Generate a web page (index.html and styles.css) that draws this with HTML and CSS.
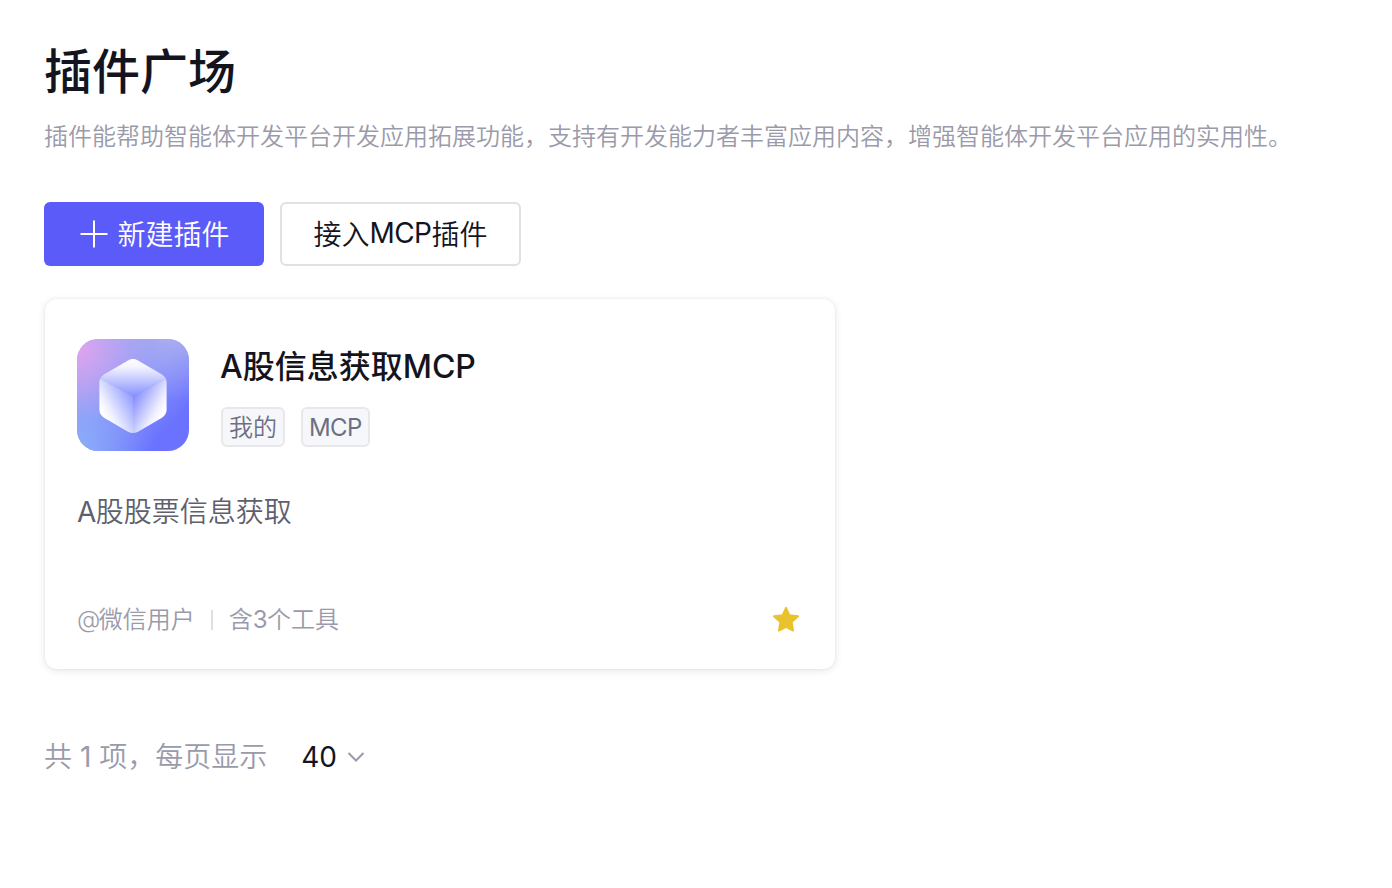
FILE: index.html
```
<!DOCTYPE html>
<html lang="zh-CN">
  <head>
    <meta charset="UTF-8" />
    <meta name="viewport" content="width=device-width, initial-scale=1.0" />
    <title>插件广场</title>
    <link rel="stylesheet" href="styles.css">
  </head>
  <body>
    <header class="page-header">
      <h1 class="page-title">插件广场</h1>
      <p class="page-desc">插件能帮助智能体开发平台开发应用拓展功能，支持有开发能力者丰富应用内容，增强智能体开发平台应用的实用性。</p>
    </header>

    <div class="actions">
      <button class="btn btn-primary">
        <svg class="plus-icon" viewBox="0 0 28 28">
          <path d="M14 .5v27M.5 14h27" />
        </svg>
        <span>新建插件</span>
      </button>
      <button class="btn btn-default">接入<span class="latin">MCP</span>插件</button>
    </div>

    <div class="card">
      <div class="card-head">
        <svg class="card-logo" viewBox="0 0 112 112">
          <defs>
            <linearGradient id="bg" x1="0.1" y1="0" x2="0.9" y2="0.8">
              <stop offset="0" stop-color="#a9aaf3" />
              <stop offset="0.5" stop-color="#8e98f9" />
              <stop offset="0.95" stop-color="#6a72ff" />
            </linearGradient>
            <radialGradient id="pink" cx="0" cy="0.1" r="0.65">
              <stop offset="0" stop-color="#e0a2ef" />
              <stop offset="1" stop-color="#c6a5f0" stop-opacity="0" />
            </radialGradient>
            <radialGradient id="blue" cx="0" cy="1" r="0.7">
              <stop offset="0" stop-color="#8cb0fa" />
              <stop offset="1" stop-color="#80a0fa" stop-opacity="0" />
            </radialGradient>
            <radialGradient id="pale" cx="0.85" cy="-0.1" r="0.65">
              <stop offset="0" stop-color="#b0b2ee" />
              <stop offset="1" stop-color="#a0a4f3" stop-opacity="0" />
            </radialGradient>
            <linearGradient id="top" x1="0" y1="0" x2="0" y2="1">
              <stop offset="0" stop-color="#fff" />
              <stop offset="0.25" stop-color="#f4f4ff" />
              <stop offset="1" stop-color="#8790ff" />
            </linearGradient>
            <linearGradient id="left" gradientUnits="userSpaceOnUse" x1="27" y1="76" x2="60" y2="58">
              <stop offset="0" stop-color="#fff" />
              <stop offset="0.2" stop-color="#eef0ff" />
              <stop offset="1" stop-color="#8791ff" />
            </linearGradient>
            <linearGradient id="right" gradientUnits="userSpaceOnUse" x1="85" y1="76" x2="52" y2="58">
              <stop offset="0" stop-color="#fff" />
              <stop offset="0.2" stop-color="#eeefff" />
              <stop offset="1" stop-color="#7780ff" />
            </linearGradient>
            <clipPath id="cube">
              <path d="M51 21.4q5-2.600 10 0l24 14q4.600 3 4.600 8.200v27q0 5.200-4.600 8.200l-24 14q-5 2.600-10 0l-24-14q-4.600-3-4.600-8.200v-27q0-5.200 4.600-8.200z" />
            </clipPath>
          </defs>
          <rect width="112" height="112" rx="21" fill="url(#bg)" />
          <rect width="112" height="112" rx="21" fill="url(#pale)" />
          <rect width="112" height="112" rx="21" fill="url(#blue)" />
          <rect width="112" height="112" rx="21" fill="url(#pink)" />
          <g clip-path="url(#cube)">
            <path d="M22 18h68v21L56 57.500 22 39z" fill="url(#top)" />
            <path d="M22 39l34 18.500V96H22z" fill="url(#left)" />
            <path d="M90 39L56 57.500V96h34z" fill="url(#right)" />
          </g>
        </svg>
        <div class="card-info">
          <h2 class="card-title">A股信息获取MCP</h2>
          <div class="tags">
            <span class="tag">我的</span>
            <span class="tag latin">MCP</span>
          </div>
        </div>
      </div>
      <p class="card-desc"><span class="latin">A</span>股股票信息获取</p>
      <div class="card-foot">
        <span><span class="at">@</span>微信用户</span>
        <i class="divider"></i>
        <span>含<span class="latin">3</span>个工具</span>
        <svg class="star" viewBox="0 0 28 28">
          <path d="M14 2.800l3.300 7.400 8.700 1-6.300 5.900 1.300 8.400-7-3.600-7 3.600 1.300-8.400L2 11.200l8.700-1z" />
        </svg>
      </div>
    </div>

    <div class="pagination">
      <span>共 <span class="num">1</span> 项，每页显示</span>
      <div class="page-size">
        <span class="num">40</span>
        <svg class="arrow" viewBox="0 0 18 12">
          <path d="M1.500 2l7.500 7.500L16.500 2" />
        </svg>
      </div>
    </div>
  </body>
</html>
```
FILE: styles.css
```
body {
  margin: 0;
  padding: 36px 44px;
  background-color: #fff;
  color: #14141e;
  font-family: Inter, "Noto Sans CJK SC", sans-serif;
  font-weight: 350;
}

h1, h2, p {
  margin: 0;
}

.latin {
  font-weight: 400;
  letter-spacing: -0.6px;
}

.num {
  font-weight: 400;
}

.page-title {
  font-size: 48px;
  font-weight: 500;
  line-height: 72px;
}

.page-desc {
  margin-top: 11px;
  font-size: 24px;
  line-height: 36px;
  color: #9a9aaa;
  white-space: nowrap;
}

.actions {
  display: flex;
  gap: 16px;
  margin-top: 47px;
}

.btn {
  display: flex;
  align-items: center;
  justify-content: center;
  box-sizing: border-box;
  height: 64px;
  padding: 0 0 2px;
  border: none;
  border-radius: 6px;
  font-family: inherit;
  font-size: 28px;
  font-weight: inherit;
  cursor: pointer;
}

.btn-primary {
  width: 220px;
  gap: 9px;
  padding-left: 2px;
  background-color: #5b5bfa;
  color: #fff;
}

.plus-icon {
  width: 28px;
  height: 28px;
  margin-top: 2px;
  fill: none;
  stroke: #fff;
  stroke-width: 2;
}

.btn-default {
  width: 241px;
  border: 2px solid #e0e0e6;
  background-color: #fff;
  color: #14141e;
}

.card {
  box-sizing: border-box;
  width: 790px;
  height: 370px;
  margin-top: 33px;
  margin-left: 1px;
  padding: 40px 32px 0;
  border-radius: 12px;
  box-shadow: 0 0 3px rgba(0, 0, 0, 0.08), 0 2px 10px rgba(0, 0, 0, 0.09);
}

.card-head {
  display: flex;
  gap: 32px;
}

.card-logo {
  width: 112px;
  height: 112px;
}

.card-title {
  margin-top: 4px;
  margin-left: -1px;
  font-size: 32px;
  font-weight: 500;
  line-height: 48px;
}

.tags {
  display: flex;
  gap: 16px;
  margin-top: 16px;
}

.tag {
  box-sizing: border-box;
  height: 40px;
  padding: 0 6px;
  border: 2px solid #e8e8ec;
  border-radius: 6px;
  background-color: #f6f7fa;
  color: #6e6e82;
  font-size: 24px;
  line-height: 37px;
}

.card-desc {
  margin-top: 39px;
  font-size: 28px;
  line-height: 44px;
  color: #5f5f6e;
}

.card-foot {
  display: flex;
  align-items: center;
  margin-top: 68px;
  font-size: 24px;
  line-height: 36px;
  color: #9a9aaa;
}

.at {
  letter-spacing: -1.5px;
}

.divider {
  width: 2px;
  height: 20px;
  margin: 0 16px;
  background-color: #dedee5;
}

.star {
  width: 28px;
  height: 28px;
  margin: 0 3px 2px auto;
  fill: #e9c22e;
  stroke: #e9c22e;
  stroke-width: 2;
  stroke-linejoin: round;
}

.pagination {
  display: flex;
  align-items: center;
  margin-top: 67px;
  font-size: 28px;
  line-height: 42px;
  color: #9a9aaa;
}

.page-size {
  display: flex;
  align-items: center;
  gap: 10px;
  margin-left: 34px;
  color: #14141e;
}

.arrow {
  width: 18px;
  height: 12px;
  fill: none;
  stroke: #9a9aaa;
  stroke-width: 2;
}
```
